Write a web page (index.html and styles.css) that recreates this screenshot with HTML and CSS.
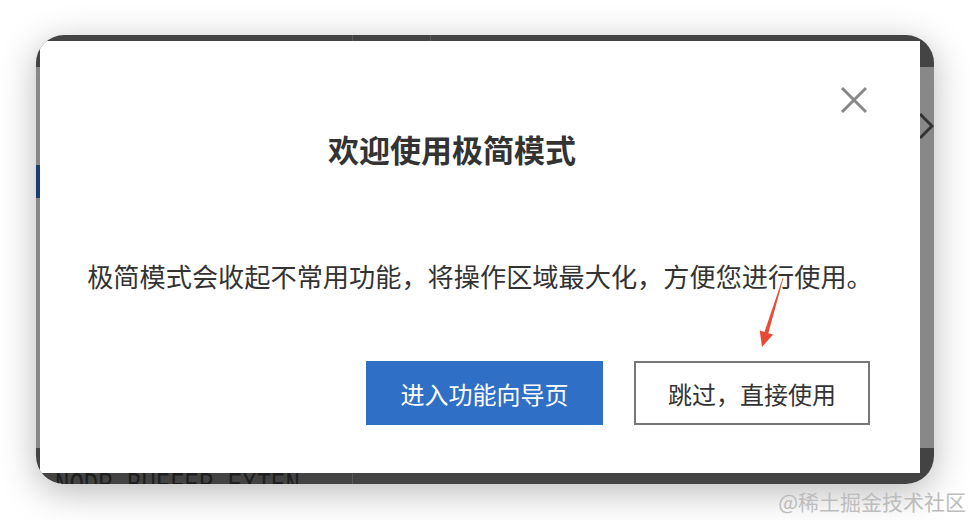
FILE: index.html
```html
<!DOCTYPE html>
<html lang="zh-CN">
<head>
  <meta charset="UTF-8" />
  <meta name="viewport" content="width=device-width, initial-scale=1.0" />
  <title>欢迎使用极简模式</title>
  <link rel="stylesheet" href="styles.css">
</head>
<body>
  <div class="window">
    <div class="app-top">
      <span class="mono">HMMS EXTENSIONS</span>
      <span class="split split-a"></span>
      <span class="split split-b"></span>
    </div>
    <div class="app-main">
      <span class="side-mark"></span>
    </div>
    <div class="app-bottom">
      <span class="mono">NODR BUFFER EXTEN</span>
      <span class="split split-a"></span>
    </div>

    <svg class="back-close" width="14" height="30" viewBox="0 0 14 30">
      <path d="M0 2 L12 14 L0 26" fill="none" stroke="#333" stroke-width="3"/>
    </svg>

    <div class="modal">
      <button class="close" aria-label="关闭">
        <svg width="28" height="28" viewBox="0 0 28 28">
          <path d="M2 2 L26 26 M26 2 L2 26" stroke="#888" stroke-width="3" fill="none"/>
        </svg>
      </button>
      <h2 class="title">欢迎使用极简模式</h2>
      <p class="desc">极简模式会收起不常用功能，将操作区域最大化，方便您进行使用。</p>
      <div class="actions">
        <button class="btn btn-primary">进入功能向导页</button>
        <button class="btn btn-outline">跳过，直接使用</button>
      </div>
    </div>
  </div>

  <svg class="arrow" width="36" height="80" viewBox="0 0 36 80">
    <polygon points="28.4,3 13.3,58.2 18.1,59.6 7,72 4.7,55.6 9.5,57 27.7,3" fill="#e94a35"/>
  </svg>

  <div class="watermark">@稀土掘金技术社区</div>
</body>
</html>
```

FILE: styles.css
```css
body { margin: 0; background: #fff; font-family: "Noto Sans CJK SC", "Noto Sans", sans-serif; width: 970px; height: 520px; overflow: hidden; position: relative; }

.window { position: relative; margin: 35px 0 0 36px; width: 898px; height: 449px; border-radius: 28px; overflow: hidden; display: flex; flex-direction: column; box-shadow: 0 8px 36px rgba(0,0,0,0.28); }
.app-top { height: 32px; background: #444; position: relative; }
.app-main { flex: 1; background: #888; position: relative; }
.app-bottom { height: 36px; background: #434343; position: relative; }

.mono { position: absolute; left: 19px; font-family: "Liberation Mono", monospace; font-size: 25px; color: #1e1e1e; white-space: nowrap; }
.app-top .mono { top: -26px; }
.app-bottom .mono { top: 20px; font-size: 24px; transform: scaleY(1.3); transform-origin: top left; }
.split { position: absolute; top: 0; bottom: 0; width: 1px; background: #5a5a5a; }
.split-a { left: 316px; }
.split-b { left: 394px; }
.side-mark { position: absolute; left: 0; top: 98px; width: 6px; height: 33px; background: #1c3d72; }

.back-close { position: absolute; right: 0; top: 77px; }

.modal { position: absolute; left: 4px; top: 6px; width: 880px; height: 432px; background: #fff; box-sizing: border-box; padding: 88px 50px 0; }
.close { position: absolute; top: 45px; right: 52px; width: 28px; height: 28px; padding: 0; border: none; background: none; cursor: pointer; }
.close svg { display: block; }

.title { margin: 0; padding-right: 56px; font-size: 31px; line-height: 40px; font-weight: bold; color: #333; text-align: center; }
.desc { margin: 89px -20px 0; font-size: 26.2px; line-height: 36px; color: #333; text-align: center; white-space: nowrap; }

.actions { margin-top: 67px; display: flex; justify-content: flex-end; gap: 31px; }
.btn { height: 64px; font-family: inherit; font-size: 24px; cursor: pointer; box-sizing: border-box; }
.btn-primary { width: 237px; background: #2f6fc5; color: #fff; border: none; }
.btn-outline { width: 236px; background: #fff; color: #333; border: 2px solid #777; }

.arrow { position: absolute; left: 755px; top: 275px; }
.watermark { position: absolute; right: 4px; top: 486px; font-size: 21px; color: #bdbdbd; }
```
